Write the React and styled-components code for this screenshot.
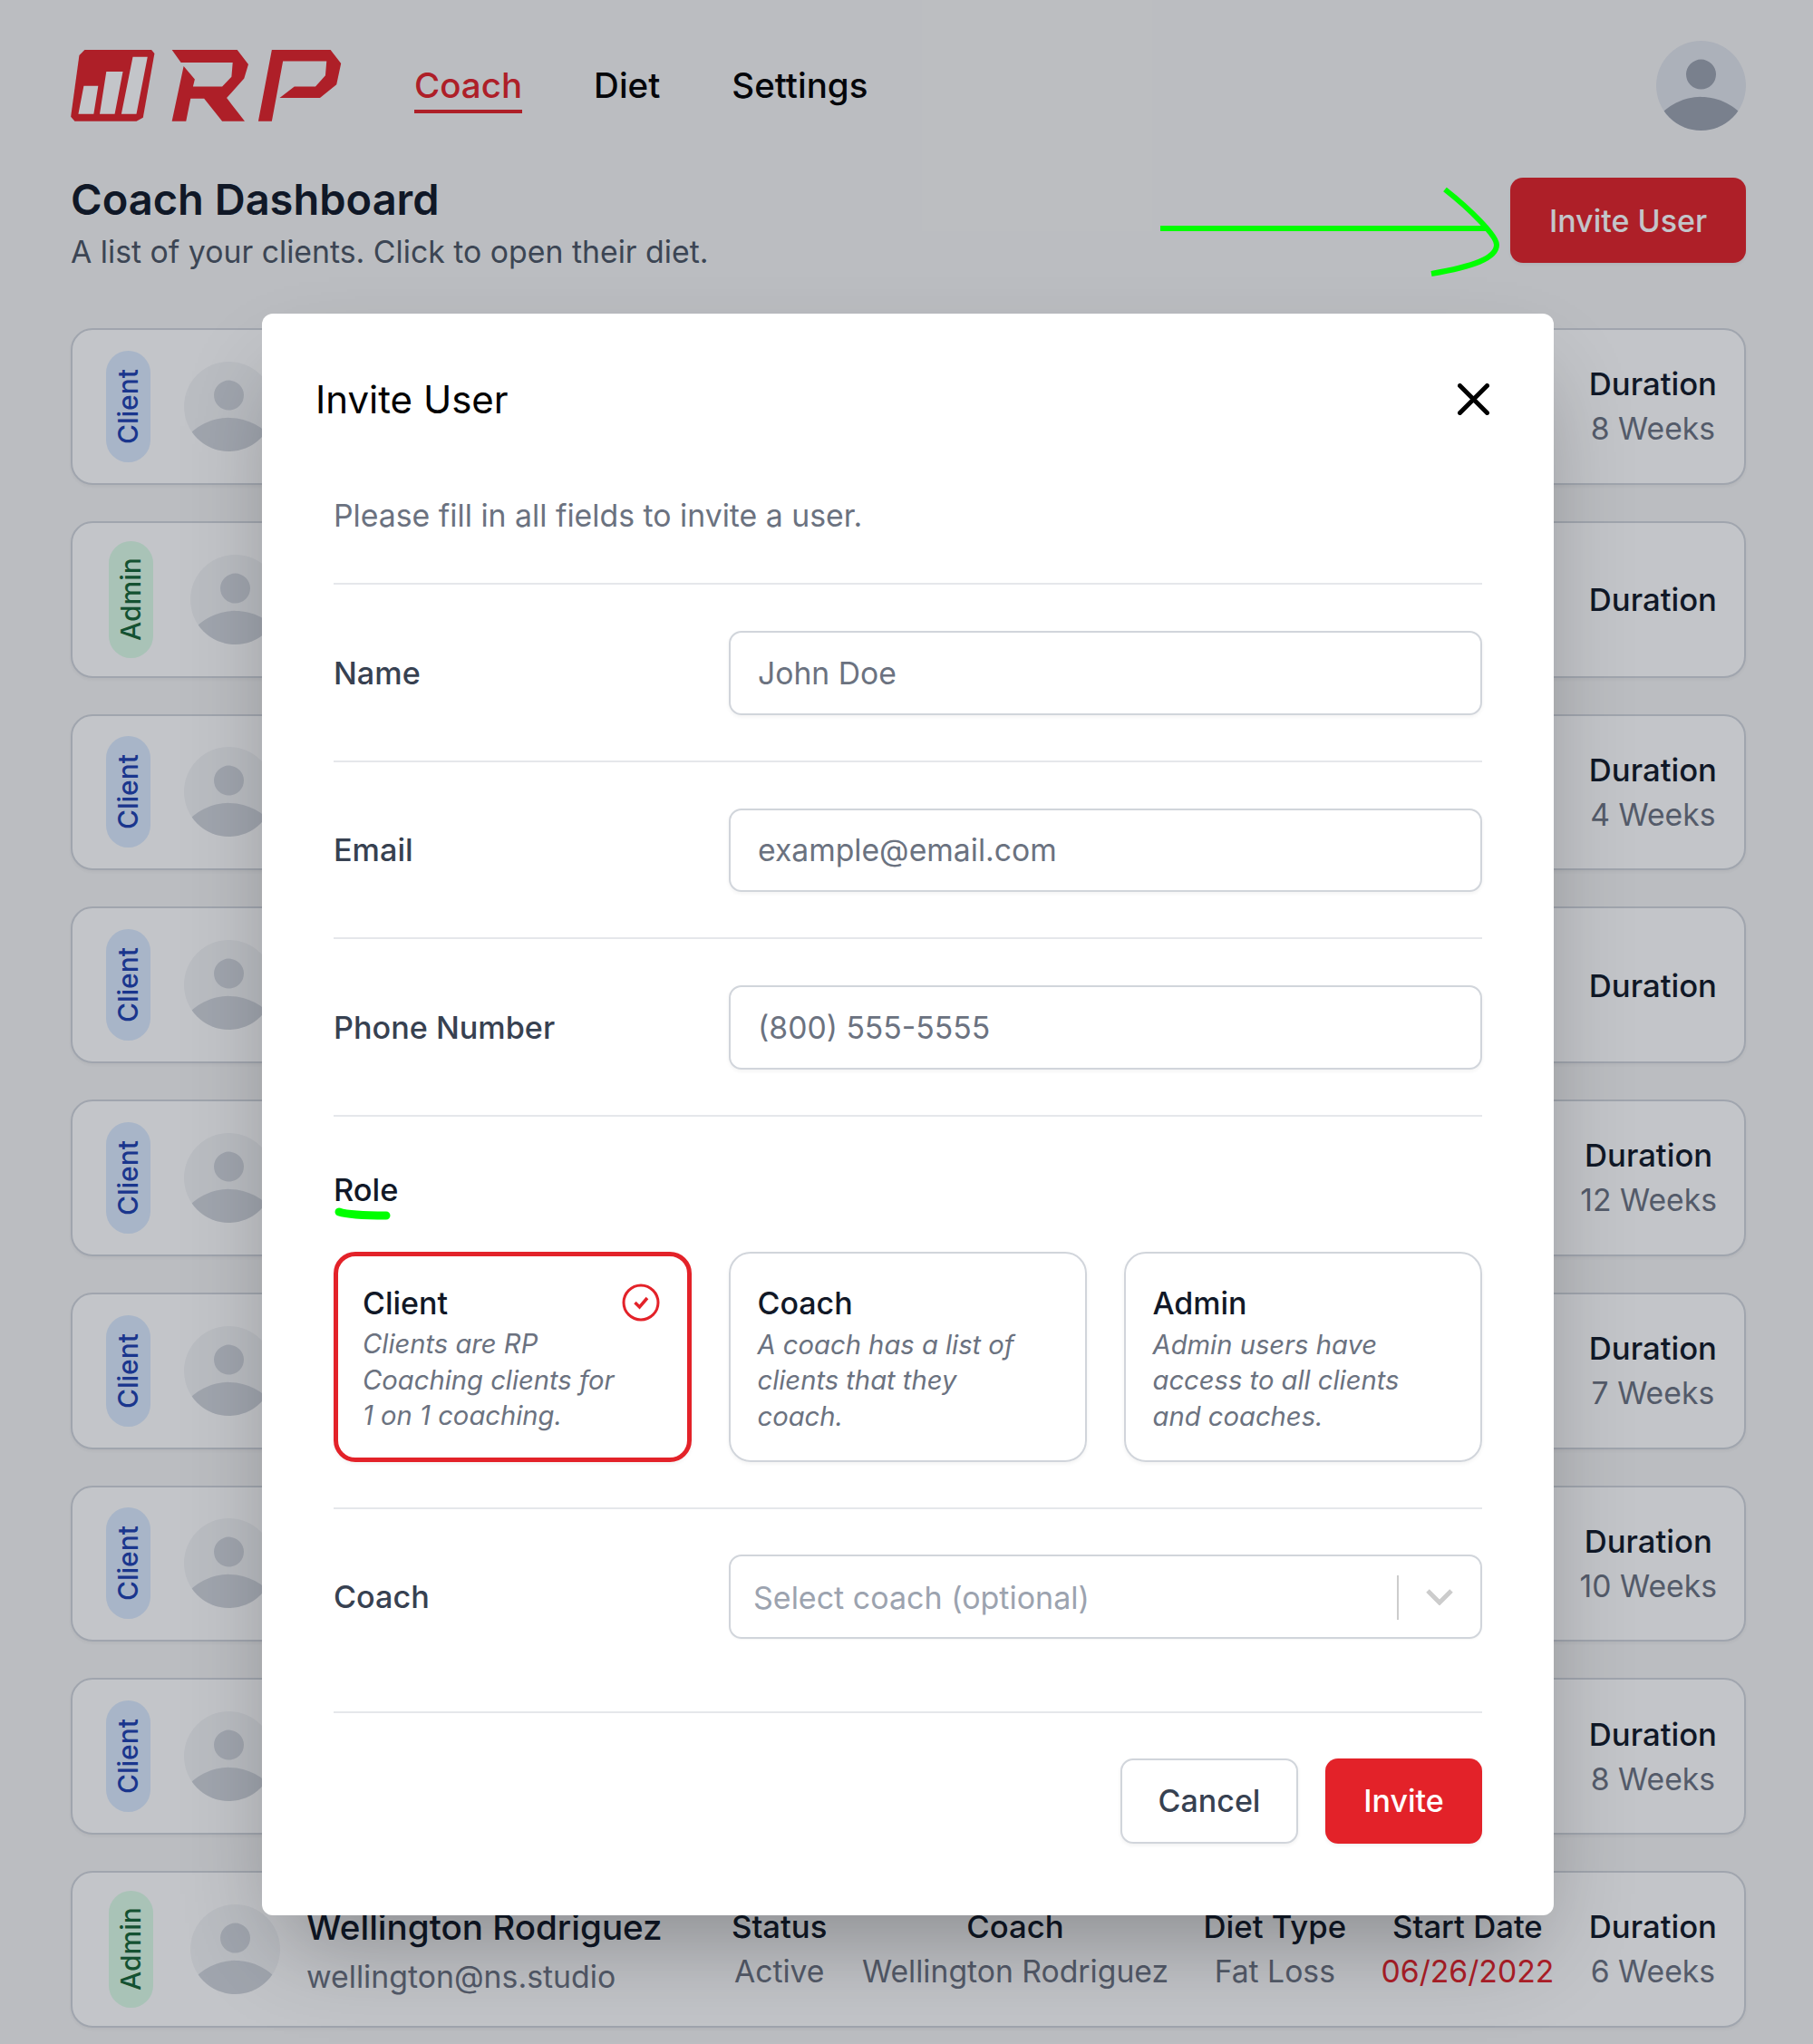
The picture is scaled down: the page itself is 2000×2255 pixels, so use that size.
import React from 'react';
import styled, { createGlobalStyle } from 'styled-components';

const GlobalStyle = createGlobalStyle`
    * { box-sizing: border-box; }
    html, body { margin: 0; padding: 0; background: #f5f5f5; }
    body { font-family: Inter, "Liberation Sans", sans-serif; color: #111827; }
`

const Page = styled.div`
    position: relative;
    height: 2255px;
    overflow: hidden;
    padding: 45px 74px 0 78px;
    background: #f5f5f5;
`
const TopBar = styled.header`
    display: flex;
    align-items: center;
    height: 99px;
`
const Nav = styled.nav`
    display: flex;
    gap: 79px;
    margin-left: 80px;
    flex: 1;
`
const NavItem = styled.a`
    font-size: 38.5px;
    line-height: 48px;
    font-weight: 500;
    color: ${({ $active }) => ($active ? '#e32229' : '#000')};
    border-bottom: 4px solid ${({ $active }) => ($active ? '#e32229' : 'transparent')};
    padding-bottom: 3px;
    margin-top: 6px;
`
const TitleRow = styled.div`
    display: flex;
    justify-content: space-between;
    align-items: flex-start;
    margin-top: 52px;
    height: 94px;
    margin-bottom: 72px;
`
const TitleBlock = styled.div`
    margin-top: -4px;
`
const PageTitle = styled.h1`
    margin: 0;
    font-size: 47px;
    line-height: 56px;
    font-weight: 600;
    color: #111827;
`
const PageSub = styled.p`
    margin: 6px 0 0;
    font-size: 33.8px;
    line-height: 48px;
    color: #4b5563;
`
const RedButton = styled.button`
    border: 0;
    width: ${({ $width }) => $width}px;
    height: 94px;
    border-radius: 14px;
    background: #e32229;
    color: #fff;
    font: 500 34px Inter, sans-serif;
    box-shadow: 0 2px 4px rgba(0, 0, 0, 0.06);
`
const ClientList = styled.ul`
    display: flex;
    flex-direction: column;
    gap: 40px;
    margin: 0;
    padding: 0;
    list-style: none;
`
const ClientCard = styled.li`
    display: flex;
    align-items: center;
    height: 172.75px;
    padding: 0 30px 0 37px;
    background: #fff;
    border: 2px solid #d1d5db;
    border-radius: 24px;
    box-shadow: 0 2px 4px rgba(0, 0, 0, 0.05);
`
const RoleBadge = styled.span`
    flex: none;
    writing-mode: vertical-rl;
    transform: rotate(180deg);
    width: 49px;
    height: ${({ $role }) => ($role === 'Admin' ? 129 : 123)}px;
    line-height: 49px;
    border-radius: 25px;
    font-size: 30px;
    font-weight: 500;
    text-align: center;
    background: ${({ $role }) => ($role === 'Admin' ? '#dcfce7' : '#dbeafe')};
    color: ${({ $role }) => ($role === 'Admin' ? '#166534' : '#1e40af')};
    margin: 0 ${({ $role }) => ($role === 'Admin' ? 41 : 37)}px 0 ${({ $role }) => ($role === 'Admin' ? 3 : 0)}px;
`
const AvatarCircle = styled.span`
    flex: none;
    display: block;
    width: ${({ $size }) => $size}px;
    height: ${({ $size }) => $size}px;
    border-radius: 50%;
    overflow: hidden;
    background: ${({ $dark }) => ($dark ? '#e1e4eb' : '#f3f4f6')};
    color: ${({ $dark }) => ($dark ? '#9ca3af' : '#d1d5db')};

    svg { display: block; width: 100%; height: 100%; }
`
const NameBlock = styled.div`
    margin-left: 29px;
    margin-top: 7px;
    flex: 1;
`
const ClientName = styled.div`
    font-size: 38.6px;
    line-height: 54px;
    font-weight: 500;
    color: #111827;
    white-space: nowrap;
`
const ClientEmail = styled.div`
    font-size: 33.8px;
    line-height: 55px;
    color: #6b7280;
`
const Stats = styled.div`
    display: flex;
    gap: 38.5px;
    margin-left: auto;
`
const Stat = styled.div`
    text-align: center;
    white-space: nowrap;
`
const StatLabel = styled.div`
    font-size: 34.7px;
    line-height: 48px;
    font-weight: 500;
    color: #111827;
`
const StatValue = styled.div`
    margin-top: 2px;
    font-size: 33.7px;
    line-height: 48px;
    color: ${({ $alert }) => ($alert ? '#e32229' : '#6b7280')};
`
const Overlay = styled.div`
    position: absolute;
    inset: 0;
    padding: 346px 286px 0 289px;
    background: rgba(17, 24, 39, 0.25);
`
const Arrow = styled.svg`
    position: absolute;
    left: 1270px;
    top: 200px;
    width: 390px;
    height: 110px;
`
const Modal = styled.div`
    height: 1767px;
    background: #fff;
    border-radius: 12px;
    box-shadow: 0 50px 100px -24px rgba(0, 0, 0, 0.3);
`
const ModalHead = styled.div`
    display: flex;
    align-items: center;
    justify-content: space-between;
    height: 188px;
    padding: 0 71px 0 59px;
`
const ModalTitle = styled.h2`
    margin: 0;
    font-size: 42px;
    font-weight: 400;
    color: #000;
`
const CloseIcon = styled.svg`
    width: 35px;
    height: 35px;
    display: block;
`
const ModalBody = styled.div`
    padding: 10.5px 79px 0;
`
const Intro = styled.p`
    margin: 0 0 50.5px;
    font-size: 33.8px;
    line-height: 48px;
    color: #6b7280;
`
const FormRow = styled.div`
    display: grid;
    grid-template-columns: 436px 1fr;
    align-items: center;
    border-top: 2px solid #e5e7eb;
    padding: ${({ $top }) => $top || 51}px 0 ${({ $bottom }) => $bottom || 50}px;
`
const FieldLabel = styled.label`
    font-size: 34.2px;
    font-weight: 500;
    color: #374151;
`
const TextInput = styled.input`
    width: 100%;
    height: 92.6px;
    padding: 0 30px;
    border: 2px solid #d1d5db;
    border-radius: 14px;
    outline: none;
    font: 400 33.7px Inter, sans-serif;
    box-shadow: 0 2px 4px rgba(0, 0, 0, 0.05);

    &::placeholder { color: #6b7280; opacity: 1; }
`
const RoleSection = styled.div`
    border-top: 2px solid #e5e7eb;
    padding: 57px 0 50px;
`
const RoleLabel = styled.div`
    position: relative;
    font-size: 34.4px;
    line-height: 48px;
    font-weight: 500;
    color: #111827;
`
const Scribble = styled.svg`
    position: absolute;
    left: 0;
    top: 42px;
    width: 66px;
    height: 18px;
`
const RoleGrid = styled.div`
    display: grid;
    grid-template-columns: repeat(3, 395px);
    justify-content: space-between;
    margin-top: 44px;
`
const RoleCard = styled.div`
    position: relative;
    height: 232px;
    padding: ${({ $selected }) => ($selected ? '28px 27px' : '31.5px 29.5px')};
    border: ${({ $selected }) => ($selected ? '5px solid #e32229' : '2px solid #d1d5db')};
    border-radius: 24px;
    box-shadow: 0 2px 4px rgba(0, 0, 0, 0.05);
`
const RoleName = styled.div`
    font-size: 34px;
    line-height: 48px;
    font-weight: 500;
    color: #111827;
`
const RoleText = styled.div`
    margin-top: 1.5px;
    font-size: 29.2px;
    line-height: 39.5px;
    font-style: italic;
    color: #6b7280;
`
const CheckMark = styled.svg`
    position: absolute;
    right: 30px;
    top: 30px;
    width: 42px;
    height: 42px;
`
const SelectBox = styled.div`
    display: flex;
    align-items: center;
    height: 93px;
    padding: 2px 30px 0 25px;
    border: 2px solid #d1d5db;
    border-radius: 14px;
    font-size: 34px;
    color: #9ca3af;
    box-shadow: 0 1px 2px rgba(0, 0, 0, 0.04);
`
const SelectText = styled.span`
    flex: 1;
`
const SelectDivider = styled.span`
    width: 2px;
    height: 49px;
    background: #cccccc;
    margin-right: 30px;
`
const Chevron = styled.svg`
    width: 30px;
    height: 18px;
    display: block;
`
const ModalFoot = styled.div`
    display: flex;
    justify-content: flex-end;
    gap: 30px;
    border-top: 2px solid #e5e7eb;
    padding-top: 50px;
`
const CancelButton = styled.button`
    width: 196px;
    height: 94px;
    background: #fff;
    border: 2px solid #d1d5db;
    border-radius: 14px;
    color: #374151;
    font: 500 34px Inter, sans-serif;
    box-shadow: 0 2px 4px rgba(0, 0, 0, 0.06);
`

const PersonIcon = () => (
    <svg viewBox="0 0 24 24" fill="currentColor">
        <path d="M24 20.993V24H0v-2.996A14.977 14.977 0 0112.004 15c4.904 0 9.26 2.354 11.996 5.993zM16.002 8.999a4 4 0 11-8 0 4 4 0 018 0z" />
    </svg>
);

const Logo = () => (
    <svg width="299" height="79" viewBox="24 30 896 238" style={{ display: 'block', flex: 'none' }}>
        <path fill="#e32229" d="M68 30H290L300 42L262 255L240 267H35L22 252L50 48Z" />
        <path fill="#fff" d="M65 150H113L98 243H47ZM140 102H195L168 243H118ZM228 53H277L240 243H190Z" />
        <path fill="#e32229" d="M358 30H575L612 78L598 125L540 190L600 267H525L465 192H420L405 267H358L397 84L434 128L428 152H525L556 120L560 72H388Z" />
        <path fill="#e32229" d="M690 30H885L920 75L905 145L850 190H716L765 152H835L868 115L872 68H727L690 267H645Z" />
    </svg>
);

const clients = [
    { role: 'Client', duration: '8 Weeks' },
    { role: 'Admin' },
    { role: 'Client', duration: '4 Weeks' },
    { role: 'Client' },
    { role: 'Client', duration: '12 Weeks' },
    { role: 'Client', duration: '7 Weeks' },
    { role: 'Client', duration: '10 Weeks' },
    { role: 'Client', duration: '8 Weeks' },
];

const roles = [
    { name: 'Client', text: ['Clients are RP', 'Coaching clients for', '1 on 1 coaching.'], selected: true },
    { name: 'Coach', text: ['A coach has a list of', 'clients that they', 'coach.'] },
    { name: 'Admin', text: ['Admin users have', 'access to all clients', 'and coaches.'] },
];

const fields = [
    { label: 'Name', placeholder: 'John Doe' },
    { label: 'Email', placeholder: 'example@email.com' },
    { label: 'Phone Number', placeholder: '(800) 555-5555' },
];

const App = () => {
    return (
        <>
            <GlobalStyle />
            <Page>
                <TopBar>
                    <Logo />
                    <Nav>
                        <NavItem $active>Coach</NavItem>
                        <NavItem>Diet</NavItem>
                        <NavItem>Settings</NavItem>
                    </Nav>
                    <AvatarCircle $size={99} $dark><PersonIcon /></AvatarCircle>
                </TopBar>
                <TitleRow>
                    <TitleBlock>
                        <PageTitle>Coach Dashboard</PageTitle>
                        <PageSub>A list of your clients. Click to open their diet.</PageSub>
                    </TitleBlock>
                    <RedButton $width={260}>Invite User</RedButton>
                </TitleRow>
                <ClientList>
                    {clients.map((client, index) => (
                        <ClientCard key={index.toString()}>
                            <RoleBadge $role={client.role}>{client.role}</RoleBadge>
                            <AvatarCircle $size={99}><PersonIcon /></AvatarCircle>
                            <Stats>
                                <Stat>
                                    <StatLabel>Duration</StatLabel>
                                    {client.duration && <StatValue>{client.duration}</StatValue>}
                                </Stat>
                            </Stats>
                        </ClientCard>
                    ))}
                    <ClientCard>
                        <RoleBadge $role="Admin">Admin</RoleBadge>
                        <AvatarCircle $size={99}><PersonIcon /></AvatarCircle>
                        <NameBlock>
                            <ClientName>Wellington Rodriguez</ClientName>
                            <ClientEmail>wellington@ns.studio</ClientEmail>
                        </NameBlock>
                        <Stats>
                            <Stat><StatLabel>Status</StatLabel><StatValue>Active</StatValue></Stat>
                            <Stat><StatLabel>Coach</StatLabel><StatValue>Wellington Rodriguez</StatValue></Stat>
                            <Stat><StatLabel>Diet Type</StatLabel><StatValue>Fat Loss</StatValue></Stat>
                            <Stat><StatLabel>Start Date</StatLabel><StatValue $alert>06/26/2022</StatValue></Stat>
                            <Stat><StatLabel>Duration</StatLabel><StatValue>6 Weeks</StatValue></Stat>
                        </Stats>
                    </ClientCard>
                </ClientList>

                <Overlay>
                    <Arrow viewBox="0 0 390 110" fill="none" stroke="#00ff00" strokeWidth="6">
                        <path d="M10 52H372" />
                        <path d="M324 9C352 31 381 60 381 70C381 85 355 94 309 102" />
                    </Arrow>
                    <Modal>
                        <ModalHead>
                            <ModalTitle>Invite User</ModalTitle>
                            <CloseIcon viewBox="0 0 35 35" stroke="#000" strokeWidth="5" strokeLinecap="round">
                                <path d="M2.5 2.5L32.5 32.5M32.5 2.5L2.5 32.5" />
                            </CloseIcon>
                        </ModalHead>
                        <ModalBody>
                            <Intro>Please fill in all fields to invite a user.</Intro>
                            {fields.map((field) => (
                                <FormRow key={field.label}>
                                    <FieldLabel>{field.label}</FieldLabel>
                                    <TextInput placeholder={field.placeholder} />
                                </FormRow>
                            ))}
                            <RoleSection>
                                <RoleLabel>
                                    Role
                                    <Scribble viewBox="0 0 66 18" fill="none" stroke="#00ff00" strokeWidth="9" strokeLinecap="round">
                                        <path d="M6 6C18 10 40 10 58 10" />
                                    </Scribble>
                                </RoleLabel>
                                <RoleGrid>
                                    {roles.map((role) => (
                                        <RoleCard key={role.name} $selected={role.selected}>
                                            <RoleName>{role.name}</RoleName>
                                            <RoleText>
                                                {role.text.map((line) => <div key={line}>{line}</div>)}
                                            </RoleText>
                                            {role.selected && (
                                                <CheckMark viewBox="0 0 42 42" fill="none" stroke="#e32229">
                                                    <circle cx="21" cy="21" r="19" strokeWidth="3" />
                                                    <path d="M14.5 21L19.5 26L28 16" strokeWidth="3.5" />
                                                </CheckMark>
                                            )}
                                        </RoleCard>
                                    ))}
                                </RoleGrid>
                            </RoleSection>
                            <FormRow $top={50} $bottom={80}>
                                <FieldLabel>Coach</FieldLabel>
                                <SelectBox>
                                    <SelectText>Select coach (optional)</SelectText>
                                    <SelectDivider />
                                    <Chevron viewBox="0 0 30 18" fill="none" stroke="#cccccc" strokeWidth="5">
                                        <path d="M2 2L15 15L28 2" />
                                    </Chevron>
                                </SelectBox>
                            </FormRow>
                            <ModalFoot>
                                <CancelButton>Cancel</CancelButton>
                                <RedButton $width={173}>Invite</RedButton>
                            </ModalFoot>
                        </ModalBody>
                    </Modal>
                </Overlay>
            </Page>
        </>
    );
};

export default App;
